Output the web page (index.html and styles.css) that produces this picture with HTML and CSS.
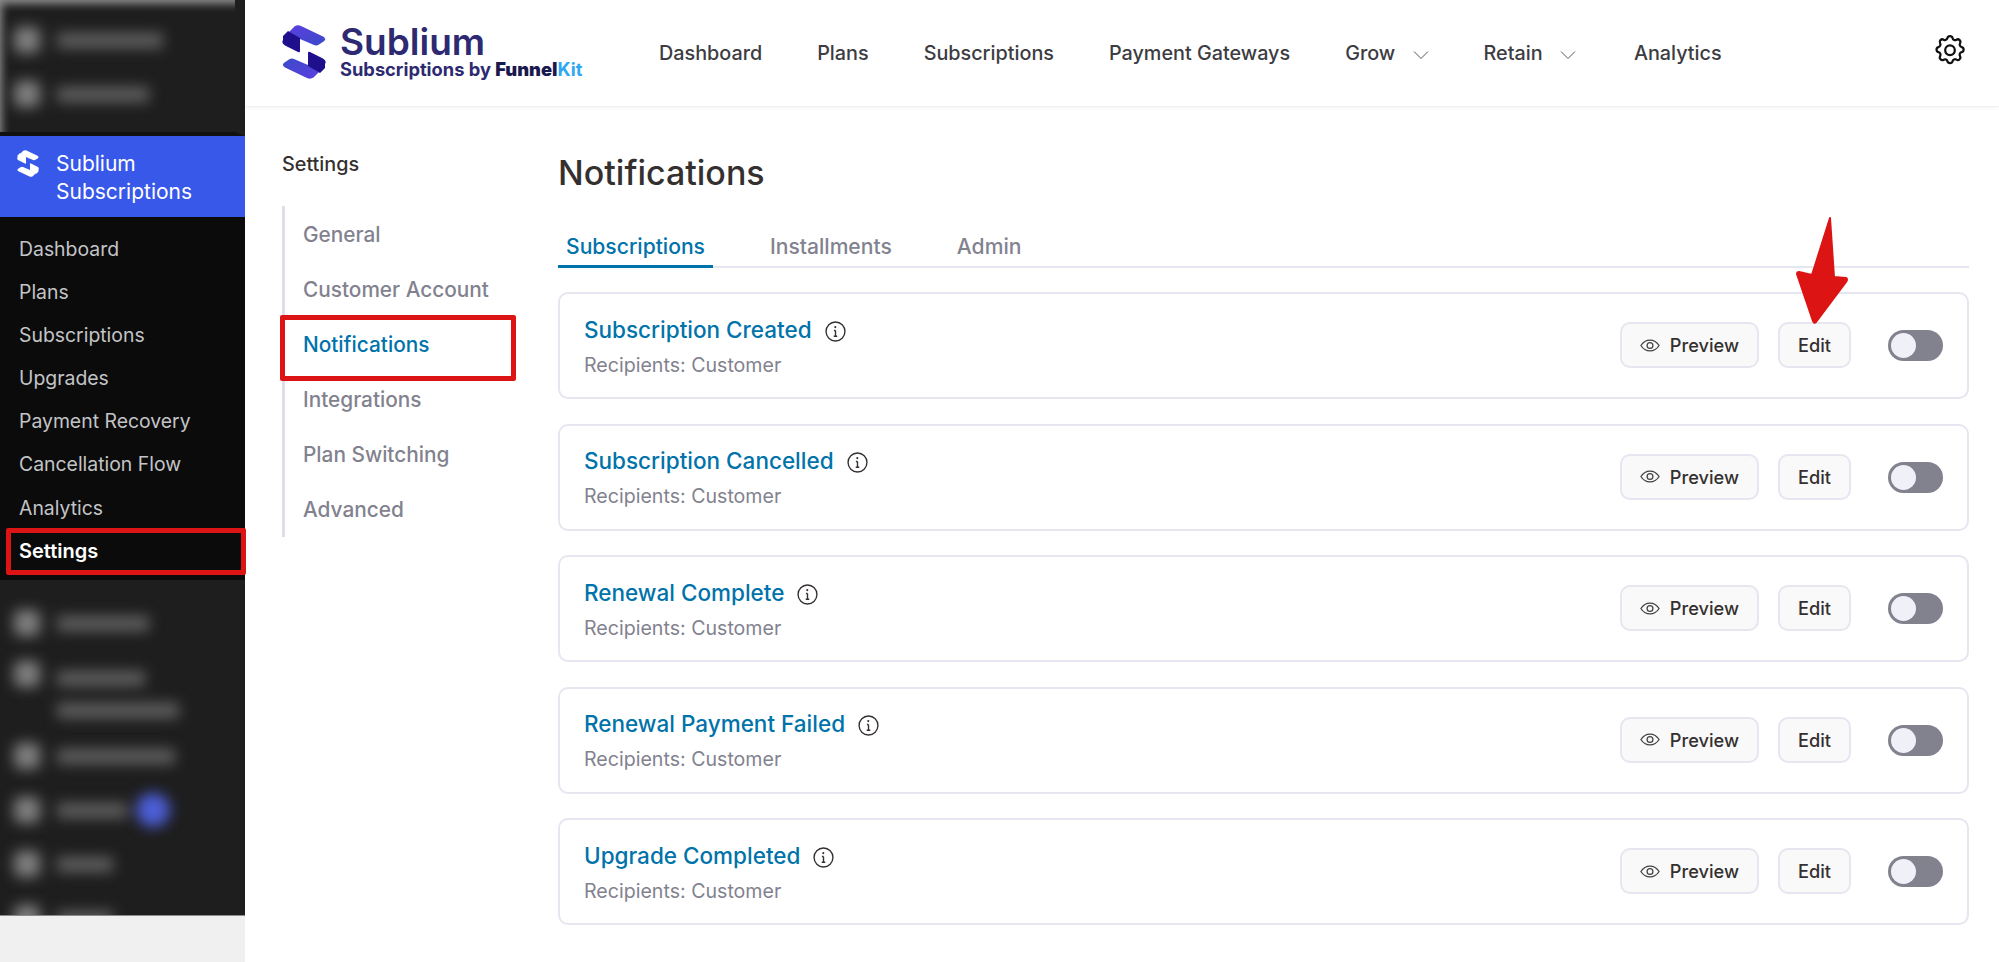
FILE: index.html
```html
<!DOCTYPE html>
<html lang="en">
<head>
    <meta charset="UTF-8">
    <meta name="viewport" content="width=device-width, initial-scale=1.0">
    <link rel="stylesheet" href="styles.css">
    <title>Notifications</title>
</head>
<body>
<div class="page">
  <!-- WordPress sidebar -->
  <aside class="wp-sidebar">
    <div class="wp-top">
      <div class="blur-row"><span class="blur-dot"></span><span class="blur-bar w106"></span></div>
      <div class="blur-row"><span class="blur-dot"></span><span class="blur-bar w92"></span></div>
    </div>
    <div class="wp-brand">
      <svg class="wp-brand-icon" viewBox="0 0 44 54">
        <g id="brandHalf" fill="#fff">
          <path d="M12.500 1.500Q15.500-.5 19 1L41 11.500Q45 14 41.500 16.500L37 19.500Q34.500 21 32 20L18 14 7 7Z"/>
          <path d="M6 6 18 13 18 26Q18 28 16 27L3 20.500Q-1 18 1 15L1 11Z"/>
        </g>
        <use href="#brandHalf" transform="rotate(180 22 27)"/>
      </svg>
      <span class="wp-brand-text">Sublium<br>Subscriptions</span>
    </div>
    <nav class="wp-menu">
      <a href="#">Dashboard</a>
      <a href="#">Plans</a>
      <a href="#">Subscriptions</a>
      <a href="#">Upgrades</a>
      <a href="#">Payment Recovery</a>
      <a href="#">Cancellation Flow</a>
      <a href="#">Analytics</a>
      <a href="#" class="current">Settings</a>
    </nav>
    <div class="wp-bottom">
      <div class="blur-row"><span class="blur-dot"></span><span class="blur-bar w92"></span></div>
      <div class="blur-row tall"><span class="blur-dot"></span><span class="blur-stack"><span class="blur-bar w88"></span><span class="blur-bar w122"></span></span></div>
      <div class="blur-row"><span class="blur-dot"></span><span class="blur-bar w120"></span></div>
      <div class="blur-row"><span class="blur-dot"></span><span class="blur-bar w70"></span><span class="blur-badge"></span></div>
      <div class="blur-row"><span class="blur-dot"></span><span class="blur-bar w56"></span></div>
      <div class="blur-row"><span class="blur-dot"></span><span class="blur-bar w56"></span></div>
    </div>
  </aside>
  <div class="wp-foot"></div>

  <div class="app">
    <!-- Top bar -->
    <header class="topbar">
      <div class="logo">
        <svg class="logo-mark" viewBox="0 0 44 54">
          <defs>
            <linearGradient id="lightBand" x1="0" y1="0" x2="1" y2="1">
              <stop offset="0" stop-color="#5a3fe0"/>
              <stop offset="1" stop-color="#3c4ac8"/>
            </linearGradient>
            <g id="logoHalf">
              <path d="M12.500 1.500Q15.500-.5 19 1L41 11.500Q45 14 41.500 16.500L37 19.500Q34.500 21 32 20L18 14 7 7Z" fill="url(#lightBand)"/>
              <path d="M6 6 18 13 18 26Q18 28 16 27L3 20.500Q-1 18 1 15L1 11Z" fill="#1f0f8c"/>
            </g>
          </defs>
          <use href="#logoHalf"/>
          <use href="#logoHalf" transform="rotate(180 22 27)"/>
        </svg>
        <div class="logo-text">
          <div class="logo-name">Sublium</div>
          <div class="logo-sub">Subscriptions by <b>Funnel</b><span>Kit</span></div>
        </div>
      </div>
      <nav class="topnav">
        <a href="#">Dashboard</a>
        <a href="#">Plans</a>
        <a href="#">Subscriptions</a>
        <a href="#">Payment Gateways</a>
        <a href="#">Grow <svg class="chev" viewBox="0 0 16 10"><path d="M1 1.500 8 8.500 15 1.500"/></svg></a>
        <a href="#" class="retain">Retain <svg class="chev" viewBox="0 0 16 10"><path d="M1 1.500 8 8.500 15 1.500"/></svg></a>
        <a href="#">Analytics</a>
      </nav>
      <svg class="gear" viewBox="0 0 24 24">
        <path d="M10.300 2.700c.4-1.700 3-1.700 3.400 0a1.700 1.700 0 0 0 2.600 1.100c1.500-.9 3.300.8 2.400 2.400a1.700 1.700 0 0 0 1.100 2.500c1.700.4 1.700 3 0 3.400a1.700 1.700 0 0 0-1.100 2.600c.9 1.500-.9 3.300-2.400 2.400a1.700 1.700 0 0 0-2.600 1.100c-.4 1.700-3 1.700-3.400 0a1.700 1.700 0 0 0-2.500-1.100c-1.600.9-3.300-.9-2.400-2.400a1.700 1.700 0 0 0-1.100-2.600c-1.700-.4-1.700-3 0-3.400a1.700 1.700 0 0 0 1.100-2.500C4.500 4.600 6.200 2.900 7.800 3.800a1.700 1.700 0 0 0 2.500-1.100Z"/>
        <circle cx="12" cy="10.800" r="3.200"/>
      </svg>
    </header>

    <div class="content">
      <!-- Settings side menu -->
      <div class="settings">
        <div class="settings-title">Settings</div>
        <nav class="settings-menu">
          <a href="#">General</a>
          <a href="#">Customer Account</a>
          <a href="#" class="active">Notifications</a>
          <a href="#">Integrations</a>
          <a href="#">Plan Switching</a>
          <a href="#">Advanced</a>
        </nav>
      </div>

      <main class="main">
        <h1>Notifications</h1>
        <div class="tabs">
          <a href="#" class="tab active">Subscriptions</a>
          <a href="#" class="tab">Installments</a>
          <a href="#" class="tab">Admin</a>
        </div>

        <div class="card">
          <div class="card-info">
            <div class="card-title">Subscription Created <svg class="info" viewBox="0 0 20 20"><circle cx="10" cy="10" r="9"/><path d="M10 9v5.500M8.500 9H10M8.300 14.500h3.400"/><circle class="dot" cx="9.800" cy="5.800" r="1"/></svg></div>
            <div class="card-sub">Recipients: Customer</div>
          </div>
          <button class="btn"><svg class="eye" viewBox="0 0 22 14"><path d="M1 7C3.500 3 7 1 11 1s7.500 2 10 6c-2.500 4-6 6-10 6S3.500 11 1 7Z"/><circle cx="11" cy="7" r="3.200"/></svg>Preview</button>
          <button class="btn">Edit</button>
          <span class="toggle"></span>
        </div>
        <div class="card">
          <div class="card-info">
            <div class="card-title">Subscription Cancelled <svg class="info" viewBox="0 0 20 20"><circle cx="10" cy="10" r="9"/><path d="M10 9v5.500M8.500 9H10M8.300 14.500h3.400"/><circle class="dot" cx="9.800" cy="5.800" r="1"/></svg></div>
            <div class="card-sub">Recipients: Customer</div>
          </div>
          <button class="btn"><svg class="eye" viewBox="0 0 22 14"><path d="M1 7C3.500 3 7 1 11 1s7.500 2 10 6c-2.500 4-6 6-10 6S3.500 11 1 7Z"/><circle cx="11" cy="7" r="3.200"/></svg>Preview</button>
          <button class="btn">Edit</button>
          <span class="toggle"></span>
        </div>
        <div class="card">
          <div class="card-info">
            <div class="card-title">Renewal Complete <svg class="info" viewBox="0 0 20 20"><circle cx="10" cy="10" r="9"/><path d="M10 9v5.500M8.500 9H10M8.300 14.500h3.400"/><circle class="dot" cx="9.800" cy="5.800" r="1"/></svg></div>
            <div class="card-sub">Recipients: Customer</div>
          </div>
          <button class="btn"><svg class="eye" viewBox="0 0 22 14"><path d="M1 7C3.500 3 7 1 11 1s7.500 2 10 6c-2.500 4-6 6-10 6S3.500 11 1 7Z"/><circle cx="11" cy="7" r="3.200"/></svg>Preview</button>
          <button class="btn">Edit</button>
          <span class="toggle"></span>
        </div>
        <div class="card">
          <div class="card-info">
            <div class="card-title">Renewal Payment Failed <svg class="info" viewBox="0 0 20 20"><circle cx="10" cy="10" r="9"/><path d="M10 9v5.500M8.500 9H10M8.300 14.500h3.400"/><circle class="dot" cx="9.800" cy="5.800" r="1"/></svg></div>
            <div class="card-sub">Recipients: Customer</div>
          </div>
          <button class="btn"><svg class="eye" viewBox="0 0 22 14"><path d="M1 7C3.500 3 7 1 11 1s7.500 2 10 6c-2.500 4-6 6-10 6S3.500 11 1 7Z"/><circle cx="11" cy="7" r="3.200"/></svg>Preview</button>
          <button class="btn">Edit</button>
          <span class="toggle"></span>
        </div>
        <div class="card">
          <div class="card-info">
            <div class="card-title">Upgrade Completed <svg class="info" viewBox="0 0 20 20"><circle cx="10" cy="10" r="9"/><path d="M10 9v5.500M8.500 9H10M8.300 14.500h3.400"/><circle class="dot" cx="9.800" cy="5.800" r="1"/></svg></div>
            <div class="card-sub">Recipients: Customer</div>
          </div>
          <button class="btn"><svg class="eye" viewBox="0 0 22 14"><path d="M1 7C3.500 3 7 1 11 1s7.500 2 10 6c-2.500 4-6 6-10 6S3.500 11 1 7Z"/><circle cx="11" cy="7" r="3.200"/></svg>Preview</button>
          <button class="btn">Edit</button>
          <span class="toggle"></span>
        </div>
      </main>
    </div>
  </div>

  <!-- Annotations drawn on the screenshot -->
  <div class="mark mark-side"></div>
  <div class="mark mark-notif"></div>
  <svg class="arrow" viewBox="0 0 56 110"><path d="M36 3 40 62 52 63 Q54 64 52 67 L22 107 Q20 109 19 106 L3 59 Q3 57 5 57 L18 60 Z" fill="#dc1414" stroke="#dc1414" stroke-width="2" stroke-linejoin="round"/></svg>
</div>
</body>
</html>
```

FILE: styles.css
```css
* {
  box-sizing: border-box;
}

body {
  margin: 0;
  background: #fff;
  font-family: Inter, "Liberation Sans", sans-serif;
  color: #353030;
}

a {
  text-decoration: none;
  color: inherit;
}

.page {
  position: relative;
  display: flex;
  width: 1999px;
  height: 962px;
  overflow: hidden;
}

/* WordPress sidebar */
.wp-sidebar {
  width: 245px;
  height: 916px;
  flex: none;
  background: #1e1e1e;
  overflow: hidden;
  border-bottom: 1px solid #8a8a8a;
}

.wp-foot {
  position: absolute;
  left: 0;
  top: 916px;
  width: 245px;
  height: 46px;
  background: #f0f0f1;
}

.wp-top {
  height: 136px;
  padding: 24px 0 0 14px;
  display: flex;
  flex-direction: column;
  gap: 22px;
  border-right: 10px solid #1e1e1e;
  border-bottom: 4px solid #111;
  box-shadow: inset 8px 10px 9px -6px #8c8c8c;
}

.blur-row {
  display: flex;
  align-items: center;
  gap: 17px;
  height: 32px;
  filter: blur(7px);
}

.blur-row.tall {
  height: 62px;
  align-items: flex-start;
  margin-bottom: -5px;
}

.blur-dot {
  width: 26px;
  height: 26px;
  border-radius: 6px;
  background: #808080;
  flex: none;
}

.blur-bar {
  display: block;
  height: 15px;
  background: #606060;
}

.blur-stack {
  display: flex;
  flex-direction: column;
  gap: 17px;
  padding-top: 10px;
}

.w56 { width: 56px; }
.w70 { width: 70px; }
.w88 { width: 88px; }
.w92 { width: 92px; }
.w106 { width: 106px; }
.w120 { width: 118px; }
.w122 { width: 122px; }

.blur-badge {
  width: 34px;
  height: 34px;
  border-radius: 50%;
  background: #4c5fd8;
  margin-left: -8px;
}

.wp-brand {
  height: 81px;
  background: #3858e9;
  color: #fff;
  display: flex;
  gap: 17px;
  padding: 14px 0 0 17px;
  font-size: 21px;
  line-height: 28px;
}

.wp-brand-icon {
  width: 22px;
  height: 27px;
  flex: none;
}

.wp-menu {
  height: 363px;
  background: #0b0b0b;
  padding: 11px 0 0 19px;
  color: #c3c4c7;
  font-size: 19.400px;
}

.wp-menu a {
  display: block;
  height: 43.100px;
  line-height: 43.100px;
}

.wp-menu a.current {
  color: #fff;
  font-size: 20px;
  font-weight: 600;
}

.wp-bottom {
  padding: 27px 0 0 14px;
  display: flex;
  flex-direction: column;
  gap: 22px;
}

/* App */
.app {
  flex: 1;
  min-width: 0;
  display: flex;
  flex-direction: column;
}

.topbar {
  height: 107px;
  flex: none;
  display: flex;
  align-items: center;
  padding: 0 0 0 37px;
  border-bottom: 1px solid #f1f1f3;
  box-shadow: 0 2px 4px rgba(0, 0, 0, 0.03);
}

.logo {
  display: flex;
  gap: 14px;
  align-items: center;
  margin-top: -3px;
  width: 377px;
  flex: none;
}

.logo-mark {
  width: 44px;
  height: 54px;
  flex: none;
}

.logo-name {
  font-size: 37px;
  font-weight: 600;
  line-height: 34px;
  color: #2d2a72;
}

.logo-sub {
  font-size: 18.300px;
  font-weight: 700;
  line-height: 20px;
  color: #2d2a72;
}

.logo-sub b {
  color: #19194f;
}

.logo-sub span {
  color: #2ea8f5;
}

.topnav {
  display: flex;
  gap: 55px;
  font-size: 19.800px;
  font-weight: 500;
  color: #3c3c42;
  flex: 1;
  margin-top: -1px;
}

.topnav a {
  white-space: nowrap;
}

.topnav .retain {
  padding-right: 3px;
}

.chev {
  width: 16px;
  height: 10px;
  margin-left: 12px;
  fill: none;
  stroke: #55555c;
  stroke-width: 1;
}

.gear {
  width: 36px;
  height: 36px;
  margin: -3px 31px 0 0;
  flex: none;
  fill: none;
  stroke: #111;
  stroke-width: 1.500;
}

.content {
  flex: 1;
  display: flex;
}

/* Settings side menu */
.settings {
  width: 313px;
  flex: none;
  padding: 45px 0 0 37px;
}

.settings-title {
  font-size: 19.800px;
  font-weight: 500;
  line-height: 24px;
  color: #353030;
}

.settings-menu {
  margin-top: 30px;
  height: 331px;
  border-left: 3px solid #dedeea;
  padding: 1px 0 0 18px;
  color: #82828f;
  font-size: 20.800px;
  font-weight: 500;
}

.settings-menu a {
  display: block;
  height: 55px;
  line-height: 55px;
}

.settings-menu a.active {
  color: #0073aa;
}

/* Main */
.main {
  width: 1411px;
  flex: none;
  padding-top: 46px;
}

h1 {
  margin: 0;
  font-size: 34px;
  font-weight: 500;
  line-height: 40px;
  color: #353030;
}

.tabs {
  display: flex;
  gap: 49px;
  margin: 34px 0 24px;
  height: 41px;
  border-bottom: 2px solid #e6e6f0;
}

.tab {
  height: 41px;
  padding: 7px 8px 0;
  font-size: 21.100px;
  line-height: 25px;
  font-weight: 500;
  color: #82828f;
}

.tab.active {
  color: #0073aa;
  border-bottom: 3px solid #0073aa;
}

.card {
  height: 107px;
  margin-bottom: 24.600px;
  display: flex;
  align-items: center;
  gap: 19px;
  padding: 0 24px;
  border: 2px solid #e6e6f0;
  border-radius: 10px;
  background: #fff;
}

.card-info {
  flex: 1;
}

.card-title {
  font-size: 22.500px;
  font-weight: 500;
  color: #0073aa;
  line-height: 30px;
  display: flex;
  align-items: center;
  gap: 13px;
}

.card-sub {
  font-size: 19.600px;
  color: #82828f;
  line-height: 24px;
  margin-top: 8px;
}

.info {
  width: 21px;
  height: 21px;
  margin-top: 3px;
  fill: none;
  stroke: #353030;
  stroke-width: 1.300;
}

.info .dot {
  fill: #353030;
  stroke: none;
}

.btn {
  height: 46px;
  margin-top: -1px;
  padding: 0 18px;
  display: flex;
  align-items: center;
  gap: 10px;
  border: 2px solid #e6e6f0;
  border-radius: 10px;
  background: #f9f9f9;
  color: #353030;
  font-family: inherit;
  font-size: 18.200px;
  font-weight: 500;
}

.eye {
  width: 20px;
  height: 13px;
  fill: none;
  stroke: #444;
  stroke-width: 1.400;
}

.toggle {
  position: relative;
  width: 55px;
  height: 31px;
  margin: 0 0 0 18px;
  border-radius: 16px;
  background: #82828f;
}

.toggle::before {
  content: "";
  position: absolute;
  left: 3px;
  top: 3px;
  width: 25px;
  height: 25px;
  border-radius: 50%;
  background: #eff0f8;
}

/* Annotations */
.mark {
  position: absolute;
  border: 5px solid #dc1414;
  border-radius: 2px;
}

.mark-side {
  left: 6px;
  top: 528px;
  width: 240px;
  height: 47px;
}

.mark-notif {
  left: 280px;
  top: 315px;
  width: 236px;
  height: 66px;
}

.arrow {
  position: absolute;
  left: 1794px;
  top: 215px;
  width: 56px;
  height: 110px;
}
```
